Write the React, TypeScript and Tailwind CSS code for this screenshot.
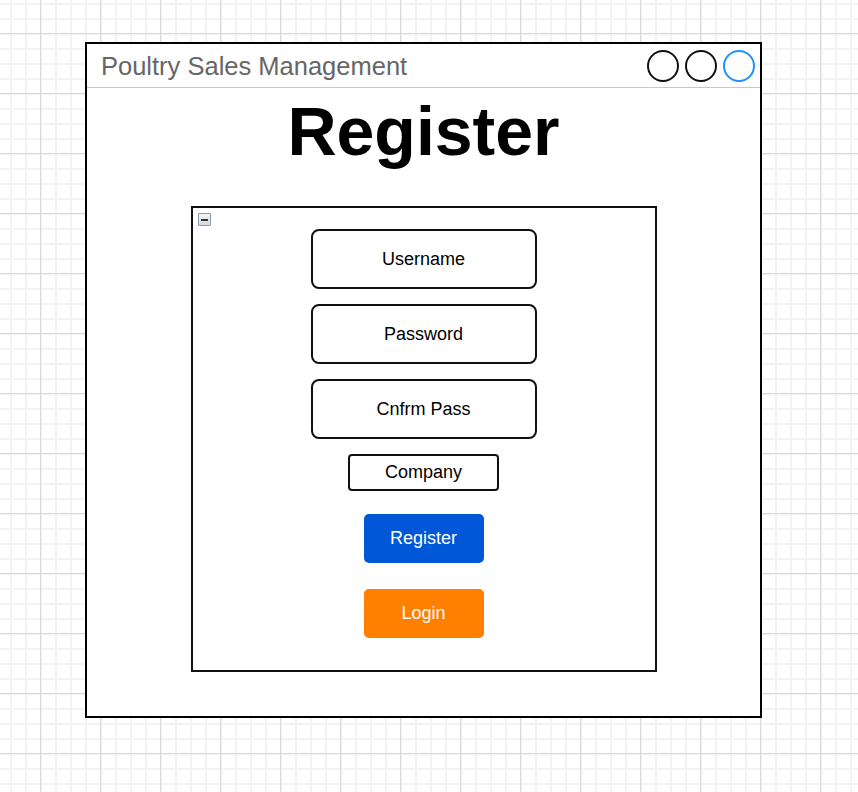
const fields = ["Username", "Password", "Cnfrm Pass"];

const App = () => {
  return (
    <div className="min-h-screen w-full bg-white bg-[linear-gradient(to_right,#d9d9d9_1px,transparent_1px),linear-gradient(to_bottom,#d9d9d9_1px,transparent_1px),linear-gradient(to_right,#f3f3f3_2px,transparent_2px),linear-gradient(to_bottom,#f3f3f3_2px,transparent_2px)] [background-size:60px_60px,60px_60px,15px_15px,15px_15px] [background-position:40px_33px,40px_33px,10px_3px,10px_3px] pt-[42px] pl-[85px] font-['Liberation_Sans',Arial,sans-serif]">
      {/* window */}
      <div className="flex h-[676px] w-[677px] flex-col border-2 border-black bg-white">
        <div className="flex h-[44px] items-center justify-between border-b border-[#c8c8c8] pl-[14px] pr-[5px]">
          <span className="pt-[3px] text-[25.5px] leading-none text-[#666666]">
            Poultry Sales Management
          </span>
          <div className="flex gap-[6px]">
            <span className="h-[32px] w-[32px] rounded-full border-2 border-[#111]" />
            <span className="h-[32px] w-[32px] rounded-full border-2 border-[#111]" />
            <span className="h-[32px] w-[32px] rounded-full border-2 border-[#1e90ff]" />
          </div>
        </div>

        <h1 className="mt-[9px] text-center text-[68px] font-bold leading-none text-black">
          Register
        </h1>

        {/* form */}
        <div className="relative mx-auto mt-[41px] flex h-[466px] w-[466px] flex-col items-center border-2 border-[#111] pt-[21px] text-[18px] text-black">
          <div className="absolute left-[5px] top-[5px] flex h-[13px] w-[13px] items-center justify-center rounded-[1px] border border-[#8b9aad] bg-[linear-gradient(to_bottom,#f4f6f8,#d3d9e0)]">
            <span className="h-[2px] w-[7px] bg-[#333]" />
          </div>

          <div className="flex flex-col gap-[15px]">
            {fields.map((f) => (
              <div
                key={f}
                className="flex h-[60px] w-[226px] items-center justify-center rounded-[8px] border-2 border-[#111]"
              >
                {f}
              </div>
            ))}
          </div>
          <div className="mt-[15px] flex h-[37px] w-[151px] items-center justify-center rounded-[4px] border-2 border-[#111]">
            Company
          </div>
          <button className="mt-[23px] flex h-[49px] w-[120px] items-center justify-center rounded-[5px] bg-[#0058d8] text-white">
            Register
          </button>
          <button className="mt-[26px] flex h-[49px] w-[120px] items-center justify-center rounded-[5px] bg-[#ff8000] text-white">
            Login
          </button>
        </div>
      </div>
    </div>
  );
};

export default App;
